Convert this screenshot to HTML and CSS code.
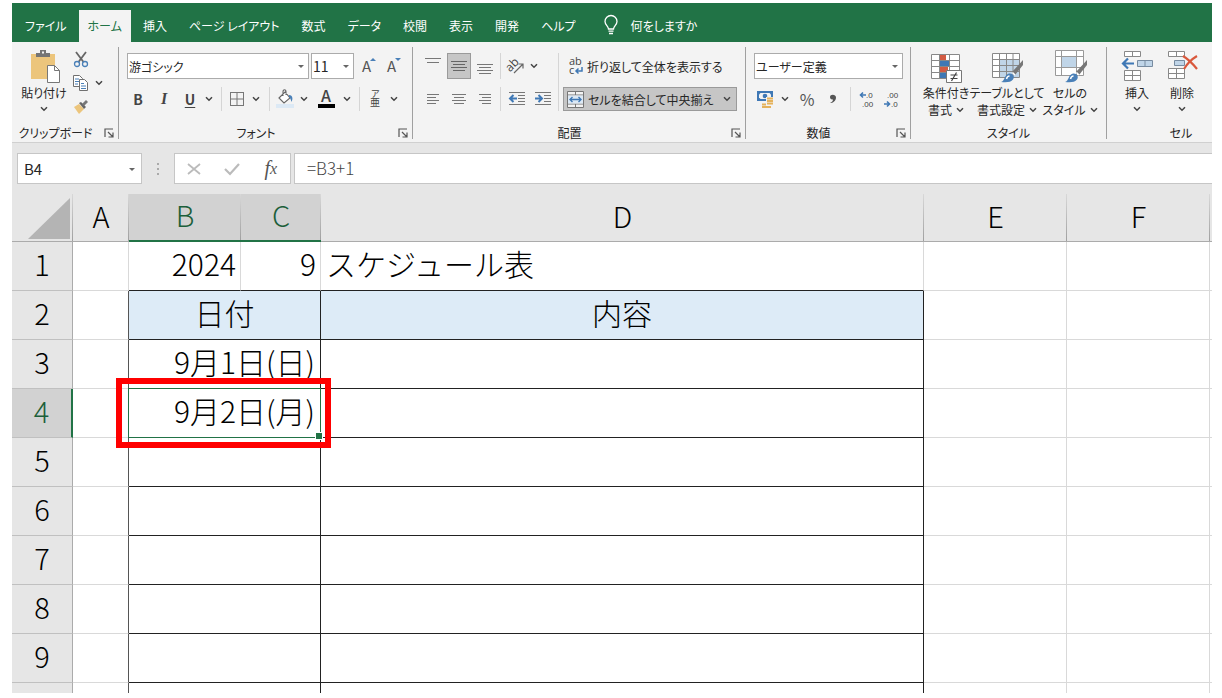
FILE: index.html
```
<!DOCTYPE html>
<html lang="ja">
<head>
<meta charset="utf-8">
<title>スケジュール表</title>
<link rel="stylesheet" href="styles.css">
</head>
<body>
<svg class="defs" width="0" height="0" aria-hidden="true">
  <symbol id="chev" viewBox="0 0 8 6"><path d="M1 1.200 4 4.200 7 1.200" fill="none" stroke="#444" stroke-width="1.500"/></symbol>
  <symbol id="launch" viewBox="0 0 10 10"><path d="M1 9V1H9M4 4 8.500 8.500M9 4.500V9H4.500" fill="none" stroke="#555" stroke-width="1.200"/></symbol>
  <symbol id="brush" viewBox="0 0 24 24"><path d="M23 1 12 13l3 3L23 6z" fill="#777"/><path d="M12.500 13.500 15 16" stroke="#fff" stroke-width="1.500"/><path d="M1 23c4-1 3-7 8-8.500 4-.5 6 3 4 6-2 3-7 3-12 2.500z" fill="#4a80b8"/><path d="M6.500 20c.5-2 1.500-3 3-3" fill="none" stroke="#fff" stroke-width="1.500"/></symbol>
</svg>
<div class="app">
  <nav class="tabs">
    <button class="tab">ファイル</button>
    <button class="tab tab-active">ホーム</button>
    <button class="tab">挿入</button>
    <button class="tab">ページ レイアウト</button>
    <button class="tab">数式</button>
    <button class="tab">データ</button>
    <button class="tab">校閲</button>
    <button class="tab">表示</button>
    <button class="tab">開発</button>
    <button class="tab">ヘルプ</button>
    <button class="tab tell-me">
      <svg width="14" height="20" viewBox="0 0 14 20"><path d="M4.500 14c0-3-3.500-4-3.500-7.500a6 6 0 0 1 12 0C13 10 9.500 11 9.500 14zM4.500 16.200h5M5 18.500h4" fill="none" stroke="#fff" stroke-width="1.300"/></svg>
      何をしますか
    </button>
  </nav>

  <div class="ribbon">
    <section class="group g-clip">
      <div class="body">
        <button class="big paste">
          <svg width="32" height="34" viewBox="0 0 32 34"><path d="M3 4h24v25H3z" fill="#ecc57c"/><path d="M8 3h4V0h6v3h4v4H8z" fill="#757575"/><path d="M14 1.500h2v2h-2z" fill="#f3f3f3"/><path d="M19.500 15.500h7l5 5v12h-12z" fill="#fff" stroke="#777"/><path d="M26.500 15.500v5h5" fill="none" stroke="#777"/></svg>
          <span>貼り付け</span>
          <svg class="chev" width="8" height="6"><use href="#chev"/></svg>
        </button>
        <div class="stack">
          <button class="tool" aria-label="切り取り"><svg width="16" height="17" viewBox="0 0 16 17"><path d="M3 1 10.500 11M13 1 5.500 11" stroke="#666" stroke-width="1.800"/><circle cx="4" cy="13" r="2.500" fill="none" stroke="#4a80b8" stroke-width="1.300"/><circle cx="12" cy="13" r="2.500" fill="none" stroke="#4a80b8" stroke-width="1.300"/></svg></button>
          <div class="line">
            <button class="tool" aria-label="コピー"><svg width="18" height="18" viewBox="0 0 18 18"><g fill="#fff" stroke="#707070"><path d="M1.500 1.500h6l3 3v8h-9z"/><path d="M7.500 5.500h5l3 3v8h-8z"/></g><path d="M3 5h4M3 7.500h4M3 10h3M9 9.500h3M9 12h5M9 14.500h5" stroke="#4a80b8"/></svg></button>
            <button class="drop" aria-label="コピーのオプション"><svg width="8" height="6"><use href="#chev"/></svg></button>
          </div>
          <button class="tool" aria-label="書式のコピー"><svg width="16" height="16" viewBox="0 0 16 16"><path d="M1 8 6 5l5 5-5 5z" fill="#ecc57c"/><path d="m6 4 2-1 5 5-2 2z" fill="#666"/><path d="m9 5 4-4 2 2-4 4z" fill="#777"/></svg></button>
        </div>
      </div>
      <div class="foot"><span>クリップボード</span><button class="launch" aria-label="クリップボードの設定"><svg width="10" height="10"><use href="#launch"/></svg></button></div>
    </section>

    <section class="group g-font">
      <div class="body rows">
        <div class="line line-top">
          <div class="combo font-name"><select aria-label="フォント"><option>游ゴシック</option></select></div>
          <div class="combo font-size"><select aria-label="フォント サイズ"><option>11</option></select></div>
          <button class="tool first-size" aria-label="拡大"><svg width="16" height="18" viewBox="0 0 16 18"><text x="2" y="15" class="glyph">A</text><path d="M10 4h6l-3-3z" fill="#4a80b8"/></svg></button>
          <button class="tool" aria-label="縮小"><svg width="16" height="18" viewBox="0 0 16 18"><text x="1" y="15" class="glyph">A</text><path d="M9 1h6l-3 3z" fill="#4a80b8"/></svg></button>
        </div>
        <div class="line line-low">
          <button class="tool bold">B</button>
          <button class="tool italic">I</button>
          <button class="tool under">U</button>
          <button class="drop narrow" aria-label="下線"><svg width="8" height="6"><use href="#chev"/></svg></button>
          <i class="sep"></i>
          <button class="tool mid" aria-label="罫線"><svg width="16" height="16" viewBox="0 0 16 16"><path d="M1 1.500h14M1 8h14M1 14.500h14M1.500 1v14M8 1v14M14.500 1v14" stroke="#777" fill="none"/></svg></button>
          <button class="drop" aria-label="罫線の種類"><svg width="8" height="6"><use href="#chev"/></svg></button>
          <i class="sep"></i>
          <button class="tool mid" aria-label="塗りつぶし"><svg width="18" height="20" viewBox="0 0 18 20"><path d="M0 15h18v4H0z" fill="#dce9f5"/><path d="m3 9 6-6 5 6-6 5zM7 7V3c0-3 3-3 3 0v3" fill="#fff" stroke="#666" stroke-width="1.100"/><path d="M13 6c4 0 4 4 2.500 7-1-3-1-4-2.500-5z" fill="#4a80b8"/></svg></button>
          <button class="drop" aria-label="塗りつぶしの色"><svg width="8" height="6"><use href="#chev"/></svg></button>
          <button class="tool wide" aria-label="フォントの色"><svg width="18" height="20" viewBox="0 0 18 20"><text x="4" y="13" class="glyph glyph-bold">A</text><path d="M1 15h17v4H1z" fill="#000"/></svg></button>
          <button class="drop narrow" aria-label="フォントの色の種類"><svg width="8" height="6"><use href="#chev"/></svg></button>
          <i class="sep"></i>
          <button class="tool mid" aria-label="ふりがな"><svg width="14" height="18" viewBox="0 0 14 18"><text x="3" y="7" class="ruby">ア</text><text x="2" y="16" class="ruby ruby-base">亜</text></svg></button>
          <button class="drop" aria-label="ふりがなの設定"><svg width="8" height="6"><use href="#chev"/></svg></button>
        </div>
      </div>
      <div class="foot"><span>フォント</span><button class="launch" aria-label="フォントの設定"><svg width="10" height="10"><use href="#launch"/></svg></button></div>
    </section>

    <section class="group g-align">
      <div class="body">
        <div class="rows">
          <div class="line line-top">
            <button class="tool" aria-label="上揃え"><svg width="16" height="18" viewBox="0 0 16 18"><path d="M0 1.500h16M2 5.500h12" stroke="#777"/></svg></button>
            <button class="tool pressed" aria-label="上下中央揃え"><svg width="16" height="18" viewBox="0 0 16 18"><path d="M0 4.500h16M2 7.500h12M0 10.500h16M2 13.500h12" stroke="#666"/></svg></button>
            <button class="tool" aria-label="下揃え"><svg width="16" height="18" viewBox="0 0 16 18"><path d="M0 7.500h16M2 10.500h12M0 13.500h16M2 16.500h12" stroke="#777"/></svg></button>
            <i class="sep sep-tight"></i>
            <button class="tool mid" aria-label="方向"><svg width="18" height="18" viewBox="0 0 18 18"><text x="1" y="13" class="ab ab-turn" transform="rotate(-45 5 12)">ab</text><path d="M7 16 16 7M11.500 7H16v4.500" fill="none" stroke="#666" stroke-width="1.200"/></svg></button>
            <button class="drop narrow" aria-label="方向の種類"><svg width="8" height="6"><use href="#chev"/></svg></button>
          </div>
          <div class="line line-low">
            <button class="tool" aria-label="左揃え"><svg width="14" height="12" viewBox="0 0 14 12"><path d="M1 1.500h12M1 4.500h9M1 7.500h12M1 10.500h9" stroke="#777"/></svg></button>
            <button class="tool" aria-label="中央揃え"><svg width="14" height="12" viewBox="0 0 14 12"><path d="M0 1.500h14M2 4.500h10M0 7.500h14M2 10.500h10" stroke="#777"/></svg></button>
            <button class="tool" aria-label="右揃え"><svg width="14" height="12" viewBox="0 0 14 12"><path d="M1 1.500h12M4 4.500h9M1 7.500h12M4 10.500h9" stroke="#777"/></svg></button>
            <i class="sep sep-tight"></i>
            <button class="tool" aria-label="インデントを減らす"><svg width="16" height="16" viewBox="0 0 16 16"><path d="M0 1.500h16M9 4.500h7M9 7.500h7M9 10.500h7M0 13.500h16" stroke="#777"/><path d="M8 7.500H1M4.500 4 1 7.500 4.500 11" fill="none" stroke="#3f78b5" stroke-width="2"/></svg></button>
            <button class="tool" aria-label="インデントを増やす"><svg width="16" height="16" viewBox="0 0 16 16"><path d="M0 1.500h16M9 4.500h7M9 7.500h7M9 10.500h7M0 13.500h16" stroke="#777"/><path d="M0 7.500h7M3.500 4 7 7.500 3.500 11" fill="none" stroke="#3f78b5" stroke-width="2"/></svg></button>
          </div>
        </div>
        <i class="sep sep-tall"></i>
        <div class="rows merge-col">
          <button class="labeled line-top">
            <svg width="16" height="18" viewBox="0 0 16 18"><text x="1" y="8" class="ab">ab</text><text x="1" y="17" class="ab">c</text><path d="M14 10v4H8M10.500 11.500 8 14l2.500 2.500" fill="none" stroke="#3f78b5" stroke-width="1.500"/></svg>
            折り返して全体を表示する
          </button>
          <button class="labeled line-low merged">
            <svg width="17" height="17" viewBox="0 0 17 17"><path d="M.5.5h16v16H.5zM.5 4h16M.5 13h16M8.500.5V4M8.500 13v3.500" fill="#f3f3f3" stroke="#777"/><path d="M1 4.500h15v8H1z" fill="#dce9f5"/><path d="M3 8.500h11M5.500 6 3 8.500 5.500 11M11.500 6 14 8.500 11.500 11" fill="none" stroke="#3f78b5" stroke-width="1.400"/></svg>
            <span>セルを結合して中央揃え</span>
            <svg width="8" height="6"><use href="#chev"/></svg>
          </button>
        </div>
      </div>
      <div class="foot"><span>配置</span><button class="launch" aria-label="配置の設定"><svg width="10" height="10"><use href="#launch"/></svg></button></div>
    </section>

    <section class="group g-num">
      <div class="body rows">
        <div class="line line-top"><div class="combo number-format"><select aria-label="表示形式"><option>ユーザー定義</option></select></div></div>
        <div class="line line-low">
          <button class="tool" aria-label="通貨"><svg width="18" height="18" viewBox="0 0 18 18"><path d="M1 1h16v10H1z" fill="#3f78b5"/><path d="M3 4.500 4.500 3h9L15 4.500v3L13.500 9h-9L3 7.500z" fill="#f3f3f3"/><circle cx="9" cy="6" r="2.300" fill="#3f78b5"/><path d="M10 7h8v4h-8zM6 11h12v7H6z" fill="#f3f3f3"/><path d="M11 8.500h6M11 11h6M11 13.500h6M6 14.500h4M6 17h9" stroke="#e5b25b" stroke-width="1.800"/></svg></button>
          <button class="drop" aria-label="通貨の種類"><svg width="8" height="6"><use href="#chev"/></svg></button>
          <button class="tool percent">%</button>
          <button class="tool comma" aria-label="桁区切り"><svg width="8" height="10" viewBox="0 0 8 10"><path d="M1 9C3 8 4 7 4 5.500 2 6 1 4.500 1 3c0-3 6-3 6 .5C7 7 4 9 1 9z" fill="#555"/></svg></button>
          <i class="sep"></i>
          <button class="tool" aria-label="小数点以下を増やす"><svg width="16" height="16" viewBox="0 0 16 16"><text x="7" y="7" class="dec">.0</text><text x="3" y="16" class="dec">.00</text><path d="M7 4H2M4 1.500 1.500 4 4 6.500" fill="none" stroke="#3f78b5" stroke-width="1.600"/></svg></button>
          <button class="tool mid" aria-label="小数点以下を減らす"><svg width="16" height="16" viewBox="0 0 16 16"><text x="3" y="7" class="dec">.00</text><text x="7" y="16" class="dec">.0</text><path d="M0 13h5M3 10.500 5.500 13 3 15.500" fill="none" stroke="#3f78b5" stroke-width="1.600"/></svg></button>
        </div>
      </div>
      <div class="foot"><span>数値</span><button class="launch" aria-label="数値の設定"><svg width="10" height="10"><use href="#launch"/></svg></button></div>
    </section>

    <section class="group g-style">
      <div class="body">
        <button class="big cond">
          <svg width="34" height="34" viewBox="0 0 34 34"><path d="M2.500 4.500h28v24h-28z" fill="#fff"/><path d="M11 4.500h6v6h-6zM11 16.500h8v6h-8z" fill="#d35b43"/><path d="M11 10.500h9v6h-9zM11 22.500h6v6h-6z" fill="#3f78b5"/><path d="M2.500 4.500h28v24h-28zM2.500 10.500h28M2.500 16.500h28M2.500 22.500h28M10.500 4.500v24M20.500 4.500v24" fill="none" stroke="#888"/><path d="M17.500 20.500h15v12h-15z" fill="#fff" stroke="#777"/><path d="M21.500 25h7M21.500 28.500h7M27.500 22.500 22.500 31" stroke="#444" stroke-width="1.200"/></svg>
          <span>条件付き</span><span>書式 <svg width="8" height="6"><use href="#chev"/></svg></span>
        </button>
        <button class="big table-style">
          <svg width="34" height="34" viewBox="0 0 34 34"><path d="M2.500 3.500h27v24h-27z" fill="#fff"/><path d="M9 9.500h20.500v18H9z" fill="#c0d5e8"/><path d="M2.500 3.500h27v24h-27zM2.500 9.500h27M2.500 15.500h27M2.500 21.500h27M9.500 3.500v24M16.500 3.500v24M23 3.500v24" fill="none" stroke="#888"/><use href="#brush" x="10" y="9" width="24" height="24"/></svg>
          <span>テーブルとして</span><span>書式設定 <svg width="8" height="6"><use href="#chev"/></svg></span>
        </button>
        <button class="big cell-style">
          <svg width="34" height="34" viewBox="0 0 34 34"><path d="M2.500.5h28v25h-28z" fill="#fff"/><path d="M8.500 6.500h15v11h-15z" fill="#c0d5e8"/><path d="M2.500.5h28v25h-28zM2.500 6.500h28M2.500 17.500h28M8.500.5v25M23.500.5v25" fill="none" stroke="#999"/><use href="#brush" x="11" y="9" width="24" height="24"/></svg>
          <span>セルの</span><span>スタイル <svg width="8" height="6"><use href="#chev"/></svg></span>
        </button>
      </div>
      <div class="foot"><span>スタイル</span></div>
    </section>

    <section class="group g-cell">
      <div class="body">
        <button class="big insert">
          <svg width="32" height="34" viewBox="0 0 32 34"><path d="M3.500 1.500h16v5h-16zM11.500 1.500v5M3.500 20.500h16v10h-16zM11.500 20.500v10M3.500 25.500h16" fill="#fff" stroke="#888"/><path d="M16.500 10.500h15v6h-15zM24 10.500v6" fill="#c0d5e8" stroke="#778ba0"/><path d="M13 13.500H2M7 8.500 2 13.500 7 18.500" fill="none" stroke="#3f78b5" stroke-width="2.200"/></svg>
          <span>挿入</span><svg class="chev" width="8" height="6"><use href="#chev"/></svg>
        </button>
        <button class="big delete">
          <svg width="32" height="34" viewBox="0 0 32 34"><path d="M2.500 1.500h16v5h-16zM10.500 1.500v5M2.500 18.500h16v10h-16zM10.500 18.500v10M2.500 23.500h16" fill="#fff" stroke="#888"/><path d="M8.500 10.500h10v5h-10z" fill="#c0d5e8" stroke="#778ba0"/><path d="M17 6c5 3 10 8 14 13M31 6c-5 3-10 8-13 13" fill="none" stroke="#d9583c" stroke-width="2.200"/></svg>
          <span>削除</span><svg class="chev" width="8" height="6"><use href="#chev"/></svg>
        </button>
      </div>
      <div class="foot"><span>セル</span></div>
    </section>
  </div>

  <div class="formula-bar">
    <div class="combo name-box"><input type="text" aria-label="名前ボックス" value="B4"></div>
    <svg class="dots" width="4" height="14" viewBox="0 0 4 14"><path d="M1 1h2v2H1zM1 6h2v2H1zM1 11h2v2H1z" fill="#aaa"/></svg>
    <div class="fx-box">
      <button class="fx-btn" aria-label="キャンセル"><svg width="14" height="12" viewBox="0 0 14 12"><path d="M1 1 13 11M13 1 1 11" stroke="#bbb" stroke-width="1.800"/></svg></button>
      <button class="fx-btn" aria-label="入力"><svg width="16" height="12" viewBox="0 0 16 12"><path d="M1 6 6 11 15 1" fill="none" stroke="#bbb" stroke-width="2.200"/></svg></button>
      <button class="fx-btn fx"><span>f</span><small>x</small></button>
    </div>
    <input class="formula" type="text" aria-label="数式" value="=B3+1">
  </div>

  <div class="sheet">
    <table>
      <colgroup><col class="c-head"><col class="c-a"><col class="c-b"><col class="c-c"><col><col class="c-e"><col class="c-e"><col class="c-g"></colgroup>
      <thead>
        <tr><th class="corner"><svg width="42" height="41" viewBox="0 0 42 41"><path d="M42 0v41H0z" fill="#b4b4b4"/></svg></th><th>A</th><th class="sel">B</th><th class="sel">C</th><th>D</th><th>E</th><th>F</th><th></th></tr>
      </thead>
      <tbody>
        <tr class="above"><th>1</th><td></td><td class="num">2024</td><td class="num">9</td><td class="title">スケジュール表</td><td></td><td></td><td></td></tr>
        <tr class="head-row"><th>2</th><td class="edge"></td><td class="box" colspan="2">日付</td><td class="box">内容</td><td></td><td></td><td></td></tr>
        <tr><th>3</th><td class="edge"></td><td class="box date" colspan="2">9月1日(日)</td><td class="box"></td><td></td><td></td><td></td></tr>
        <tr><th class="sel">4</th><td class="edge"></td><td class="box date current" colspan="2">9月2日(月)<span class="cursor"></span><span class="callout"></span></td><td class="box"></td><td></td><td></td><td></td></tr>
        <tr><th>5</th><td class="edge"></td><td class="box" colspan="2"></td><td class="box"></td><td></td><td></td><td></td></tr>
        <tr><th>6</th><td class="edge"></td><td class="box" colspan="2"></td><td class="box"></td><td></td><td></td><td></td></tr>
        <tr><th>7</th><td class="edge"></td><td class="box" colspan="2"></td><td class="box"></td><td></td><td></td><td></td></tr>
        <tr><th>8</th><td class="edge"></td><td class="box" colspan="2"></td><td class="box"></td><td></td><td></td><td></td></tr>
        <tr><th>9</th><td class="edge"></td><td class="box" colspan="2"></td><td class="box"></td><td></td><td></td><td></td></tr>
        <tr><th></th><td class="edge"></td><td class="box" colspan="2"></td><td class="box"></td><td></td><td></td><td></td></tr>
      </tbody>
    </table>
  </div>
</div>
</body>
</html>
```
FILE: styles.css
```
* { box-sizing: border-box; }
body {
  margin: 0;
  background: #fff;
  color: #262626;
  font-family: "Noto Sans CJK JP", sans-serif;
  font-size: 12px;
  font-feature-settings: "palt";
}
button, input, select {
  margin: 0;
  padding: 0;
  border: 0;
  background: none;
  color: inherit;
  font: inherit;
  font-feature-settings: inherit;
}
svg { display: block; flex: none; overflow: visible; }
.defs { position: absolute; }
.app {
  display: flex;
  flex-direction: column;
  height: 100vh;
  padding: 3px 10px 5px 12px;
}

/* tabs */
.tabs {
  display: flex;
  flex: none;
  height: 39px;
  padding: 7px 0 0 2px;
  background: #217346;
  color: #fff;
  overflow: hidden;
}
.tab { padding: 0 11px 2px; white-space: nowrap; }
.tab-active { margin: 0 1px; padding: 0 9px 2px; background: #f3f3f3; color: #217346; }
.tell-me { display: flex; align-items: center; gap: 13px; margin-left: 6px; }

/* ribbon */
.ribbon {
  display: flex;
  flex: none;
  padding: 5px 0 3px;
  background: #f3f3f3;
  border-bottom: 1px solid #d0d0d0;
  overflow: hidden;
}
.group {
  display: flex;
  flex: none;
  flex-direction: column;
  height: 92px;
  border-right: 1px solid #a0a0a0;
}
.g-clip { width: 107px; }
.g-font { width: 294px; }
.g-align { width: 333px; }
.g-num { width: 165px; }
.g-style { width: 196px; }
.g-cell { width: 148px; border: 0; }
.body { display: flex; flex: 1; min-height: 0; }
.rows { display: flex; flex-direction: column; gap: 8px; padding-top: 6px; }
.g-font .body, .g-num .body { padding-left: 6px; }
.g-align .body, .g-clip .body { padding-left: 7px; }
.g-style .body { padding-left: 9px; }
.g-cell .body { padding-left: 8px; }
.foot { display: flex; height: 12px; line-height: 12px; }
.foot span { flex: 1; text-align: center; white-space: nowrap; }
.launch { display: flex; align-items: center; width: 19px; padding-left: 5px; }
.line { display: flex; }
.line-top { height: 26px; }
.line-low { height: 24px; }
.tool, .drop { display: flex; align-items: center; justify-content: center; }
.tool { width: 26px; }
.drop { width: 14px; }
.narrow { width: 12px; }
.mid { width: 24px; }
.wide { width: 30px; }
.percent { width: 30px; font-size: 16px; color: #555; }
.comma { width: 22px; }
.sep { flex: none; width: 1px; margin: 0 3px 0 6px; background: #d5d5d5; }
.sep-tight { margin-left: 2px; }
.sep-tall { height: 58px; margin: 6px 4px 0 2px; }
.pressed, .merged { border: 1px solid #9a9a9a; background: #c6c6c6; }
.pressed { width: 24px; margin: 0 1px; }
.stack { display: flex; flex-direction: column; }
.stack .tool { width: 23px; height: 24px; }
.bold, .under { font-size: 14px; font-weight: 700; color: #444; }
.italic { font-family: "Liberation Serif", serif; font-size: 16px; font-weight: 700; font-style: italic; color: #444; }
.under { text-decoration: underline; text-underline-offset: 2px; }
.glyph { font-size: 15px; fill: #555; }
.glyph-bold { font-size: 16px; font-weight: 500; fill: #444; }
.ab { font-family: "Open Sans", sans-serif; font-size: 11px; fill: #444; }
.ab-turn { font-size: 12px; }
.dec { font-family: "Liberation Sans", sans-serif; font-size: 8px; fill: #444; }
.ruby { font-size: 9px; fill: #444; }
.ruby-base { font-size: 10px; }

.combo { position: relative; border: 1px solid #ababab; background: #fff; }
.combo::after {
  content: "";
  position: absolute;
  right: 4px;
  top: 50%;
  margin-top: -1px;
  border: 3px solid transparent;
  border-top-color: #666;
  border-bottom: 0;
  pointer-events: none;
}
.combo select, .combo input {
  width: 100%;
  height: 100%;
  appearance: none;
  outline: 0;
}
.combo select { padding-left: 1px; }
.font-name { width: 182px; margin: 0 2px; }
.font-size { width: 43px; font-size: 14px; }
.first-size { margin-left: 1px; }
.number-format { width: 149px; margin-left: 2px; }

.labeled { display: flex; align-items: center; gap: 3px; padding-left: 5px; white-space: nowrap; }
.merge-col { width: 174px; }
.merged { padding: 0 5px 0 3px; gap: 4px; }
.merged span { flex: 1; text-align: left; }

.big { display: flex; flex-direction: column; align-items: center; padding-top: 3px; line-height: 17px; white-space: nowrap; }
.big > span { display: flex; align-items: center; gap: 4px; }
.big .chev { margin-top: 5px; }
.paste { width: 50px; }
.cond { width: 52px; }
.table-style { width: 70px; }
.cell-style { width: 56px; }
.insert { width: 44px; }
.delete { width: 46px; }

/* formula bar */
.formula-bar {
  display: flex;
  flex: none;
  align-items: center;
  height: 51px;
  padding: 0 0 0 5px;
  background: #e6e6e6;
}
.name-box, .fx-box, .formula { height: 31px; border: 1px solid #c6c6c6; background: #fff; }
.name-box { width: 125px; font-size: 15px; }
.name-box input { padding-left: 6px; }
.name-box::after { right: 6px; }
.dots { margin: 0 14px; }
.fx-box { display: flex; width: 117px; }
.fx-btn { display: flex; flex: 1; align-items: center; justify-content: center; }
.fx { color: #555; font: italic 400 20px "Liberation Serif", serif; }
.fx small { font-size: 16px; }
.formula { flex: 1; min-width: 0; margin-left: 3px; padding: 0 0 2px 12px; border-right: 0; font-size: 17px; font-weight: 300; color: #444; outline: 0; }

/* sheet */
.sheet { flex: 1; min-height: 0; overflow: hidden; }
table {
  width: 100%;
  table-layout: fixed;
  border-collapse: separate;
  border-spacing: 0;
  color: #000;
  font-size: 30px;
  font-weight: 300;
  line-height: 40px;
  font-feature-settings: normal;
}
.c-head { width: 61px; }
.c-a { width: 56px; }
.c-b { width: 112px; }
.c-c { width: 80px; }
.c-e { width: 143px; }
.c-g { width: 2px; }
th, td { height: 49px; padding: 0 0 6px; border: 0 solid #d9d9d9; border-width: 0 1px 1px 0; }
th { background: #e6e6e6; border-color: #ababab; font-size: 29px; font-weight: 300; text-align: center; }
thead th {
  height: 48px;
  border-right: 0;
  background: linear-gradient(#d8d8d8, #a0a0a0) right / 1px 100% no-repeat #e6e6e6;
}
thead th.sel { background-color: #d2d2d2; border-bottom: 2px solid #217346; color: #1c5f3a; }
thead th:last-child { background: #e6e6e6; }
tbody th { border-bottom-color: #c0c0c0; }
tbody th.sel { background: #d2d2d2; border-right: 2px solid #217346; color: #1c5f3a; }
thead .corner { padding: 4px 3px 2px 0; }
.corner svg { margin-left: auto; }
td:last-child { border-right: 0; }
.num { padding-right: 4px; text-align: right; }
.title { padding-left: 5px; }
.above td:nth-child(n+3):nth-child(-n+5) { border-bottom-color: #222; }
.edge { border-right-color: #555; }
.box { border-color: #222; text-align: center; }
.head-row .box { background: #ddebf7; }
.date { padding-right: 5px; text-align: right; }
.current { position: relative; }
.cursor { position: absolute; inset: -1px; border: 1px solid #217346; }
.cursor::after { content: ""; position: absolute; right: -3px; bottom: -3px; width: 6px; height: 6px; border: 1px solid #fff; background: #217346; }
.callout { position: absolute; inset: -11px -11px -11px -13px; border: 6px solid #f00; }
```
